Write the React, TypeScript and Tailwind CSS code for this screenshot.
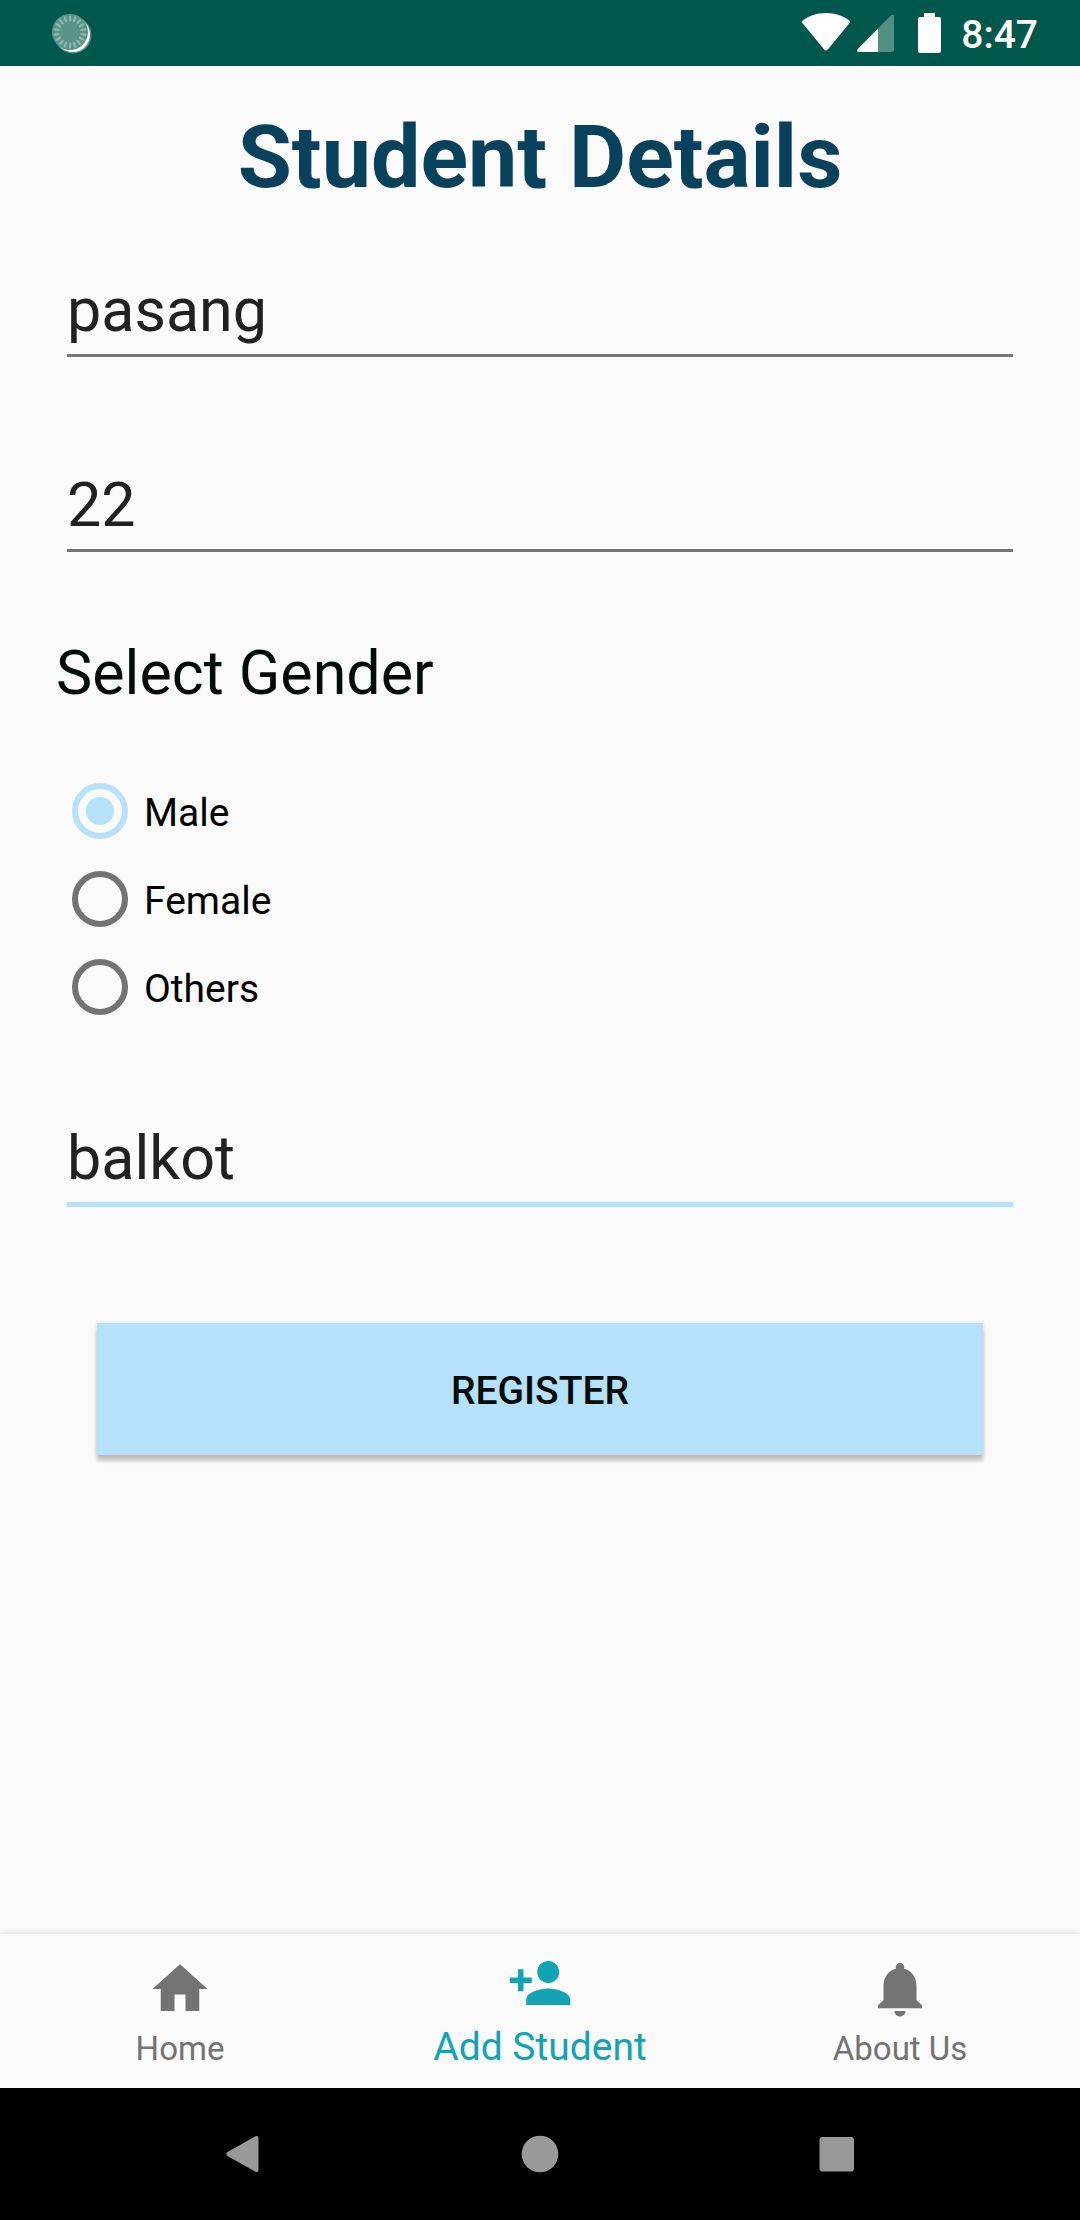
import { useState } from "react";
import type { ReactNode } from "react";

function SyncIcon() {
  const ticks = Array.from({ length: 18 }, (_, i) => i * 20);
  return (
    <svg className="h-[42px] w-[42px]" viewBox="0 0 42 42" aria-hidden="true">
      <circle cx="23" cy="23" r="18.5" fill="#fff" opacity="0.35" />
      <circle cx="22.6" cy="22.6" r="17.4" fill="#fff" />
      <circle cx="20" cy="20" r="18" fill="#5a9389" />
      <g stroke="#8fb8b1" strokeWidth="2.2" strokeLinecap="round">
        {ticks.map((angle) => (
          <path key={angle} d="M20 4.5v4" transform={`rotate(${angle} 20 20)`} />
        ))}
      </g>
    </svg>
  );
}

function StatusBar() {
  return (
    <header className="flex h-[66px] items-center justify-between bg-[#00574b] pr-[42px] pl-[50px] text-white">
      <SyncIcon />
      <div className="flex items-center">
        <svg className="h-10 w-12" viewBox="0 0 48 40" fill="#fff" aria-hidden="true">
          <path d="M24 0C15 0 7 2.8 1 7.200Q-.6 8.500.6 10.300L22.200 36.600Q24 38.600 25.800 36.600L47.400 10.300Q48.600 8.500 47 7.200C41 2.800 33 0 24 0Z" />
        </svg>
        <svg className="ml-[7px] h-10 w-[37px]" viewBox="0 0 37 40" aria-hidden="true">
          <path d="M21 15.500V39H2Q-1 39 .6 36.200Z" fill="#fff" />
          <path d="M21 15.500 33.600 2.700Q37 .6 37 3.500V37Q37 39 35 39H21Z" fill="#528f86" />
        </svg>
        <svg className="ml-6 h-10 w-[23px]" viewBox="0 0 23 40" fill="#fff" aria-hidden="true">
          <path d="M6 0H17V4H21Q23 4 23 6V38Q23 40 21 40H2Q0 40 0 38V6Q0 4 2 4H6Z" />
        </svg>
        <span className="ml-5 pt-[3px] text-[39px] leading-[46px] font-medium">8:47</span>
      </div>
    </header>
  );
}

const fieldClass =
  "block h-[83px] w-full border-b-[3px] border-[#757575] bg-transparent pb-[9px] text-[61px] leading-[71px] text-[#212121] outline-none";
const focusedFieldClass =
  "block h-[85px] w-full border-b-[5px] border-[#b5e1fb] bg-transparent pb-[9px] text-[61px] leading-[71px] text-[#212121] outline-none";

const genders = ["Male", "Female", "Others"];

function StudentForm() {
  const [gender, setGender] = useState("Male");
  return (
    <form className="flex flex-col px-14" onSubmit={(e) => e.preventDefault()}>
      <div className="mt-[65px] px-[11px]">
        <input aria-label="Name" className={fieldClass} defaultValue="pasang" />
      </div>
      <div className="mt-28 px-[11px]">
        <input aria-label="Age" className={fieldClass} defaultValue="22" inputMode="numeric" />
      </div>
      <fieldset className="mt-[85px]">
        <legend className="text-[61px] leading-[72px] text-[#010c0a]">Select Gender</legend>
        <div className="mt-[58px] flex flex-col items-start pl-4">
          {genders.map((name) => (
            <label
              key={name}
              className="flex h-[88px] items-center gap-4 text-[39px] leading-[46px] text-black"
            >
              <input
                type="radio"
                name="gender"
                value={name}
                checked={gender === name}
                onChange={() => setGender(name)}
                className="size-14 appearance-none rounded-full border-[6px] border-[#737373] bg-clip-content p-2 checked:border-[#b5e1fb] checked:bg-[#b5e1fb]"
              />
              <span className="pt-[3px]">{name}</span>
            </label>
          ))}
        </div>
      </fieldset>
      <div className="mt-[91px] px-[11px]">
        <input aria-label="Address" className={focusedFieldClass} defaultValue="balkot" />
      </div>
      <button
        type="submit"
        className="mx-[41px] mt-[116px] h-[132px] bg-[#b5e1fb] pt-[3px] text-[39px] leading-[46px] font-medium text-[#010c0a] shadow-[0_6px_4px_rgba(0,0,0,0.2),0_1px_5px_rgba(0,0,0,0.12)]"
      >
        REGISTER
      </button>
    </form>
  );
}

function Tab({ href, label, active, path }: { href: string; label: string; active?: boolean; path: string }) {
  return (
    <a
      href={href}
      aria-current={active ? "page" : undefined}
      className={
        active
          ? "flex flex-col items-center justify-end gap-2 pb-[18px] text-[39px] leading-[46px] text-[#12a3b4]"
          : "flex flex-col items-center justify-end gap-[7px] pb-[19px] text-[33px] leading-[40px] text-[#737373]"
      }
    >
      <svg className="size-[66px]" viewBox="0 0 24 24" fill="currentColor" aria-hidden="true">
        <path d={path} />
      </svg>
      {label}
    </a>
  );
}

function TabBar() {
  return (
    <nav className="mt-auto grid h-[154px] grid-cols-3 bg-[#fafafa] shadow-[0_-1px_6px_rgba(0,0,0,0.12)]">
      <Tab href="#home" label="Home" path="M10 20v-6h4v6h5v-8h3L12 3 2 12h3v8z" />
      <Tab
        href="#add"
        label="Add Student"
        active
        path="M15 12c2.210 0 4-1.790 4-4s-1.790-4-4-4-4 1.790-4 4 1.790 4 4 4zm-9-2V7H4v3H1v2h3v3h2v-3h3v-2H6zm9 4c-2.670 0-8 1.340-8 4v2h16v-2c0-2.660-5.330-4-8-4z"
      />
      <Tab
        href="#about"
        label="About Us"
        path="M12 22c1.100 0 2-.9 2-2h-4c0 1.100.89 2 2 2zm6-6v-5c0-3.070-1.640-5.640-4.500-6.320V4c0-.83-.67-1.500-1.500-1.500s-1.500.67-1.500 1.500v.68C7.630 5.360 6 7.920 6 11v5l-2 2v1h16v-1l-2-2z"
      />
    </nav>
  );
}

function KeyButton({ label, children }: { label: string; children: ReactNode }) {
  return (
    <button type="button" aria-label={label} className="flex items-center justify-center">
      <svg className="size-[38px]" viewBox="0 0 38 38" fill="#999" aria-hidden="true">
        {children}
      </svg>
    </button>
  );
}

function SystemKeys() {
  return (
    <footer className="relative grid h-[132px] grid-cols-3 bg-black px-[94px]">
      <KeyButton label="Back">
        <path d="M3.500 17 31.500 1.300Q34.500 0 34.500 3.300V34.700Q34.500 38 31.500 36.700L3.500 21Q1 19 3.500 17Z" />
      </KeyButton>
      <KeyButton label="Home screen">
        <circle cx="19" cy="19" r="18.3" />
      </KeyButton>
      <KeyButton label="Recent apps">
        <rect x="1.500" y="2" width="34.500" height="34.500" rx="3" />
      </KeyButton>
    </footer>
  );
}

export default function App() {
  return (
    <div className="flex min-h-screen flex-col bg-[#fafafa] font-['Roboto',sans-serif]">
      <StatusBar />
      <main className="pt-[39px] pb-16">
        <h1 className="text-center text-[88px] leading-[104px] font-bold text-[#08415c]">Student Details</h1>
        <StudentForm />
      </main>
      <TabBar />
      <SystemKeys />
    </div>
  );
}
